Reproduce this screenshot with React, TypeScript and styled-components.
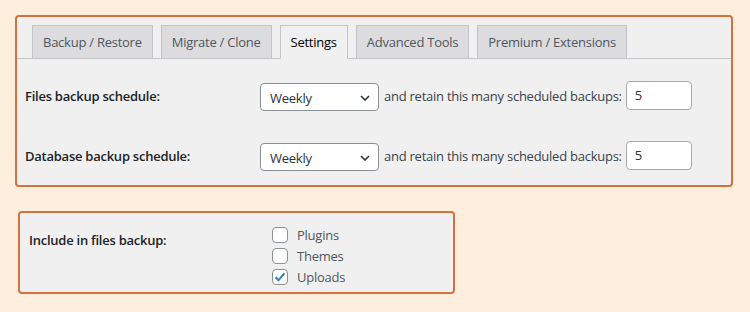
import { createGlobalStyle, styled } from "styled-components";

const GlobalStyle = createGlobalStyle`
	html, body {
		margin: 0;
		padding: 0;
		background: #fdeedd;
	}
	body {
		font-family: "Open Sans", "Noto Sans", sans-serif;
		letter-spacing: -0.25px;
		color: #1d2327;
	}
`;

const Page = styled.div`
	width: 750px;
	height: 312px;
	padding: 15px 0 0 15px;
	box-sizing: border-box;
	display: flex;
	flex-direction: column;
	align-items: flex-start;
	gap: 24px;
`;

const Panel = styled.section<{ $width: number; $indent?: number }>`
	width: ${(p) => p.$width}px;
	margin-left: ${(p) => p.$indent || 0}px;
	box-sizing: border-box;
	border: 2px solid #d4723f;
	border-radius: 4px;
	background: #f0f0f1;
`;

const TabBar = styled.nav`
	display: flex;
	gap: 8px;
	margin-top: 8px;
	padding-left: 15px;
	border-bottom: 1px solid #c3c4c7;
`;

const Tab = styled.div<{ $active?: boolean }>`
	height: 34px;
	box-sizing: border-box;
	padding: 0 10px;
	margin-bottom: -1px;
	display: flex;
	align-items: center;
	font-size: 13px;
	font-weight: 500;
	color: ${(p) => (p.$active ? "#000" : "#50575e")};
	background: ${(p) => (p.$active ? "#f0f0f1" : "#dcdcde")};
	border: 1px solid #c3c4c7;
	border-bottom-color: ${(p) => (p.$active ? "#f0f0f1" : "#c3c4c7")};
`;

const Form = styled.div`
	display: flex;
	flex-direction: column;
	gap: 30px;
	padding: 22px 0 14px 8px;
`;

const Row = styled.div`
	display: flex;
	align-items: center;
	height: 30px;
`;

const Label = styled.div<{ $width: number }>`
	width: ${(p) => p.$width}px;
	flex-shrink: 0;
	font-size: 13px;
	font-weight: 600;
	color: #1d2327;
`;

const Select = styled.div`
	width: 119px;
	height: 28px;
	box-sizing: border-box;
	border: 1px solid #8c8f94;
	border-radius: 4px;
	background: #fff;
	display: flex;
	align-items: center;
	justify-content: space-between;
	padding: 2px 8px 0 9px;
	font-size: 13px;
	color: #2c3338;
	margin-top: 2px;
`;

const Note = styled.span`
	font-size: 13px;
	color: #3c434a;
	margin: 0 4px 0 5px;
`;

const NumberInput = styled.div`
	width: 66px;
	height: 29px;
	box-sizing: border-box;
	border: 1px solid #a7aaad;
	border-radius: 4px;
	background: #fff;
	display: flex;
	align-items: center;
	padding: 0 8px;
	font-size: 13px;
	color: #2c3338;
	margin-top: -2px;
`;

const IncludeBody = styled.div`
	display: flex;
	align-items: flex-start;
	padding: 11px 0 5px 9px;
`;

const IncludeLabel = styled(Label)`
	margin-top: 7px;
`;

const CheckList = styled.div`
	display: flex;
	flex-direction: column;
`;

const CheckRow = styled.label`
	height: 21px;
	display: flex;
	align-items: center;
	gap: 9px;
	font-size: 13px;
	color: #50575e;
`;

const Box = styled.span`
	width: 16px;
	height: 16px;
	box-sizing: border-box;
	border: 1px solid #8c8f94;
	border-radius: 4px;
	background: #fff;
	display: flex;
	align-items: center;
	justify-content: center;
`;

function Chevron() {
	return (
		<svg width="10" height="6" viewBox="0 0 10 6">
			<path d="M1 1l4 4 4-4" fill="none" stroke="#2c3338" strokeWidth="1.6" />
		</svg>
	);
}

function Check() {
	return (
		<svg width="12" height="10" viewBox="0 0 12 10">
			<path d="M1.5 5.2l3 3 6-7" fill="none" stroke="#3582c4" strokeWidth="2" />
		</svg>
	);
}

const tabs = ["Backup / Restore", "Migrate / Clone", "Settings", "Advanced Tools", "Premium / Extensions"];

const schedules = ["Files backup schedule:", "Database backup schedule:"];

const includes = [
	{ name: "Plugins", checked: false },
	{ name: "Themes", checked: false },
	{ name: "Uploads", checked: true },
];

export default function App() {
	return (
		<>
			<GlobalStyle />
			<Page>
				<Panel $width={718}>
					<TabBar>
						{tabs.map((t) => (
							<Tab key={t} $active={t === "Settings"}>
								{t}
							</Tab>
						))}
					</TabBar>
					<Form>
						{schedules.map((s) => (
							<Row key={s}>
								<Label $width={235}>{s}</Label>
								<Select>
									<span>Weekly</span>
									<Chevron />
								</Select>
								<Note>and retain this many scheduled backups:</Note>
								<NumberInput>5</NumberInput>
							</Row>
						))}
					</Form>
				</Panel>
				<Panel $width={437} $indent={3}>
					<IncludeBody>
						<IncludeLabel $width={243}>Include in files backup:</IncludeLabel>
						<CheckList>
							{includes.map((i) => (
								<CheckRow key={i.name}>
									<Box>{i.checked && <Check />}</Box>
									{i.name}
								</CheckRow>
							))}
						</CheckList>
					</IncludeBody>
				</Panel>
			</Page>
		</>
	);
}
